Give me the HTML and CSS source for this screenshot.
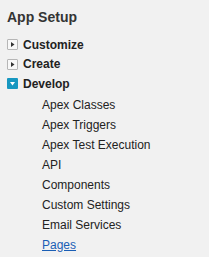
FILE: index.html
```html
<!DOCTYPE html>
<html>
<head>
<meta charset="utf-8">
<link rel="stylesheet" href="styles.css">
</head>
<body>
<div class="panel">
  <h2 class="title">App Setup</h2>
  <ul class="tree">
    <li class="node">
      <span class="toggle closed"><svg width="11" height="11" viewBox="0 0 11 11"><path d="M4 3 L7.5 5.5 L4 8 Z" fill="#333"/></svg></span>
      <span class="label">Customize</span>
    </li>
    <li class="node">
      <span class="toggle closed"><svg width="11" height="11" viewBox="0 0 11 11"><path d="M4 3 L7.5 5.5 L4 8 Z" fill="#333"/></svg></span>
      <span class="label">Create</span>
    </li>
    <li class="node">
      <span class="toggle open"><svg width="11" height="11" viewBox="0 0 11 11"><path d="M3 4 L8 4 L5.5 7.5 Z" fill="#fff"/></svg></span>
      <span class="label">Develop</span>
    </li>
  </ul>
  <ul class="children">
    <li>Apex Classes</li>
    <li>Apex Triggers</li>
    <li>Apex Test Execution</li>
    <li>API</li>
    <li>Components</li>
    <li>Custom Settings</li>
    <li>Email Services</li>
    <li><a class="link" href="#">Pages</a></li>
  </ul>
</div>
</body>
</html>
```
FILE: styles.css
```css
html, body {
  margin: 0;
  padding: 0;
  background: #f1f1f1;
}
body {
  font-family: "Liberation Sans", Arial, sans-serif;
  color: #333435;
}
.panel {
  padding: 8px 0 0 7px;
}
.title {
  margin: 0 0 9px 0;
  font-size: 14px;
  font-weight: bold;
  color: #343434;
  line-height: 18px;
}
.tree, .children {
  list-style: none;
  margin: 0;
  padding: 0;
}
.node {
  display: flex;
  align-items: center;
  height: 19.5px;
  font-size: 12px;
  font-weight: bold;
  color: #222;
}
.toggle {
  width: 11px;
  height: 11px;
  box-sizing: border-box;
  display: flex;
  margin-right: 5px;
  border-radius: 1px;
}
.toggle.closed {
  border: 1px solid #b6b6b6;
  background: #f8f8f8;
}
.toggle.open {
  background: #1797c0;
}
.toggle svg {
  display: block;
  margin: -1px;
}
.toggle.open svg {
  margin: 0;
}
.children {
  padding-left: 35px;
  margin-top: 1px;
}
.children li {
  font-size: 12px;
  line-height: 20px;
  height: 20px;
  color: #222;
}
.link {
  color: #1a5eb5;
  text-decoration: underline;
}
```
